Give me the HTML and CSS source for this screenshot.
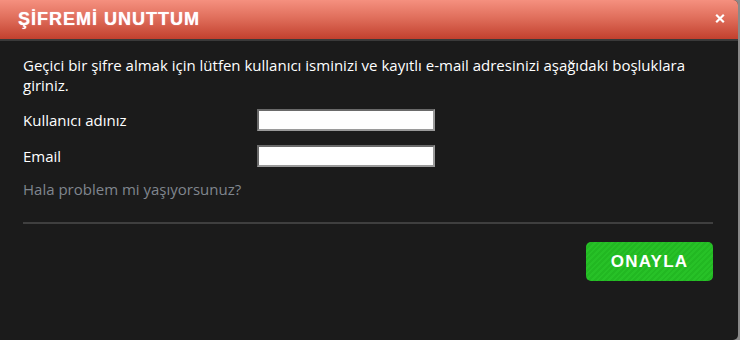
FILE: index.html
```html
<!DOCTYPE html>
<html lang="tr">
<head>
<meta charset="utf-8">
<link rel="stylesheet" href="styles.css">
</head>
<body>
<div class="modal">
  <div class="modal-header">
    <h1 class="modal-title">ŞİFREMİ UNUTTUM</h1>
    <svg class="close" width="10" height="9" viewBox="0 0 10 9"><path d="M1.2 0.8 L8.8 8.2 M8.8 0.8 L1.2 8.2" stroke="#fff" stroke-width="2.2" stroke-linecap="butt"/></svg>
  </div>
  <div class="modal-body">
    <p class="intro">Geçici bir şifre almak için lütfen kullanıcı isminizi ve kayıtlı e-mail adresinizi aşağıdaki boşluklara giriniz.</p>
    <div class="field">
      <label class="label">Kullanıcı adınız</label>
      <input class="input" type="text">
    </div>
    <div class="field">
      <label class="label">Email</label>
      <input class="input" type="text">
    </div>
    <a class="help">Hala problem mi yaşıyorsunuz?</a>
    <div class="divider"></div>
    <div class="actions">
      <button class="btn">ONAYLA</button>
    </div>
  </div>
</div>
</body>
</html>
```
FILE: styles.css
```css
html, body {
  margin: 0;
  padding: 0;
  background: #8a8a8a;
  height: 340px;
  overflow: hidden;
}
.modal {
  width: 738px;
  height: 340px;
  background: #1b1b1b;
  border-radius: 0 5px 5px 0;
  overflow: hidden;
  font-family: "Open Sans", "DejaVu Sans", sans-serif;
}
.modal-header {
  height: 41px;
  box-sizing: border-box;
  border-bottom: 2px solid #3a3a3a;
  background: linear-gradient(#f5907f 0%, #e06f5c 45%, #c2402e 100%);
  display: flex;
  align-items: center;
  justify-content: space-between;
  padding: 0 13px 0 18px;
}
.modal-title {
  margin: 0;
  font-family: "Liberation Sans", Arial, sans-serif;
  font-weight: bold;
  font-size: 18px;
  color: #fff;
  letter-spacing: 1px;
  text-shadow: 0 0 1px rgba(255,230,255,0.8);
}
.close {
  display: block;
  margin-top: -3px;
}
.modal-body {
  padding: 14px 25px 0 23px;
  color: #fff;
  font-size: 15px;
  line-height: 20px;
}
.intro {
  margin: 0;
}
.field {
  display: flex;
  align-items: center;
  margin-top: 14px;
}
.label {
  width: 234px;
}
.input {
  width: 178px;
  height: 22px;
  box-sizing: border-box;
  border: 2px solid;
  border-color: #6a6a6a #9a9a9a #9a9a9a #6a6a6a;
  background: #fff;
  margin: 0;
  padding: 0;
}
.help {
  display: block;
  margin-top: 12px;
  color: #80868e;
}
.divider {
  height: 2px;
  background: #3f3f3f;
  margin-top: 23px;
}
.actions {
  display: flex;
  justify-content: flex-end;
  margin-top: 18px;
}
.btn {
  width: 127px;
  height: 39px;
  border: none;
  border-radius: 5px;
  background: repeating-linear-gradient(135deg, #22b822 0 2px, #27c127 2px 4px);
  color: #fff;
  font-family: "Liberation Sans", Arial, sans-serif;
  font-weight: bold;
  font-size: 17px;
  letter-spacing: 1.2px;
  padding: 0;
}
```
